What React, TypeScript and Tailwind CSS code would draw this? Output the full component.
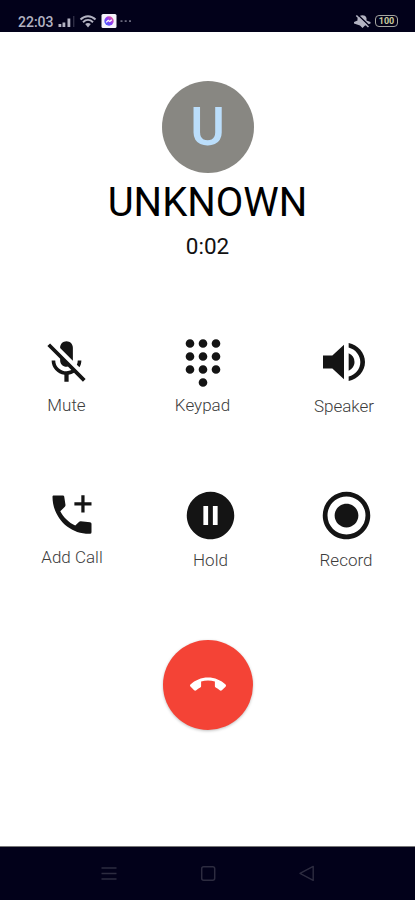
import type { ReactNode } from 'react'
import {
  MdCallEnd,
  MdDialpad,
  MdPauseCircleFilled,
  MdRadioButtonChecked,
  MdVolumeUp,
} from 'react-icons/md'

function StatusBar() {
  return (
    <header className="flex h-8 shrink-0 items-start justify-between bg-[#02011a] pt-[13px] pr-[17px] pl-[18px] text-[#b3b3c2]">
      <div className="flex h-4 items-center">
        <span className="w-[35px] pt-px text-[14px] leading-4 font-medium">22:03</span>
        <svg className="ml-[5px] h-4 w-[17px]" viewBox="0 0 17 16" fill="currentColor">
          <rect x="0.5" y="11" width="2.8" height="3" />
          <rect x="4.5" y="9.5" width="2.8" height="4.5" />
          <rect x="9.5" y="5.5" width="2.8" height="8.5" />
          <rect x="15" y="3" width="1.4" height="11" opacity="0.25" />
        </svg>
        <svg className="ml-1 h-4 w-[18px]" viewBox="0 0 18 16" fill="none" stroke="currentColor" strokeWidth="2">
          <path d="M1.5 6.5C6 2 12 2 16.5 6.5" />
          <path d="M4 9.2C7 6.3 11 6.3 14 9.2" />
          <path d="M6.2 11l2.8 3.5 2.8-3.5C10 9.5 8 9.5 6.2 11z" fill="currentColor" stroke="none" />
        </svg>
        <svg className="ml-1 h-4 w-4" viewBox="0 0 16 16">
          <defs>
            <linearGradient id="chat" x1="0" y1="1" x2="1" y2="0">
              <stop offset="0" stopColor="#2b6cff" />
              <stop offset="0.5" stopColor="#8a3df5" />
              <stop offset="1" stopColor="#ff5a7a" />
            </linearGradient>
          </defs>
          <rect x="0.5" y="1" width="15" height="14" rx="1.5" fill="#f4f3fa" />
          <circle cx="8" cy="8" r="4.7" fill="url(#chat)" />
          <path d="M5.2 9.4l2-2 1.6 1.1 2-1.8" fill="none" stroke="#fff" strokeWidth="1.3" />
        </svg>
        <svg className="ml-[3px] h-4 w-3" viewBox="0 0 12 16" fill="currentColor" opacity="0.65">
          <rect x="0.5" y="7.3" width="2" height="1.6" />
          <rect x="4.7" y="7.3" width="2" height="1.6" />
          <rect x="9" y="7.3" width="2" height="1.6" />
        </svg>
      </div>
      <div className="flex h-4 items-center gap-1">
        <svg className="h-4 w-[18px]" viewBox="0 0 18 16">
          <path d="M1 9L4.5 7.5V5.5C5 2.5 12 0.5 13.5 5v2.5L17.5 9v1.5L12 12.5 9.5 15 7 12.5 1 10.5z" fill="currentColor" />
          <path d="M4.5 1.5L16 12.5" stroke="#02011a" strokeWidth="1.6" />
          <path d="M3.3 2.5L15.5 14" stroke="currentColor" strokeWidth="1.6" />
        </svg>
        <div className="flex h-3 w-[23px] items-center justify-center rounded-[4px] border border-[#a5a5a0] text-[9px] leading-none font-bold text-[#c9c99f]">
          100
        </div>
      </div>
    </header>
  )
}

function MicOffIcon() {
  return (
    <svg className="h-[51px] w-[51px]" viewBox="0 0 24 24" fill="currentColor">
      <path d="M19 11h-1.7c0 .74-.16 1.43-.43 2.05l1.23 1.23c.56-.98.9-2.09.9-3.28zm-4.02.17c0-.06.02-.11.02-.17V5c0-1.66-1.34-3-3-3S9 3.34 9 5v.18l5.98 5.99zM4.27 3L3 4.27l6.01 6.01V11c0 1.66 1.33 3 2.99 3 .22 0 .44-.03.65-.08l1.66 1.66c-.71.33-1.5.52-2.31.52-2.76 0-5.3-2.1-5.3-5.1H5c0 3.41 2.72 6.23 6 6.72V21h2v-3.28c.91-.13 1.77-.45 2.54-.9L19.73 21 21 19.73 4.27 3z" />
    </svg>
  )
}

function AddCallIcon() {
  return (
    <svg className="h-[52px] w-[52px]" viewBox="0 0 24 24" fill="currentColor">
      <path d="M3.7 3h4.1q.5 0 .6.5l.6 3.9q0 .5-.3.8L6.6 10.3c1.5 2.9 3.9 5.2 6.9 6.6l1.7-1.7q.3-.3.8-.3l4.3.4q.7.1.7.7v4q0 .7-.7.7C10.5 20.9 3.1 13 3 3.7 3 3.2 3.2 3 3.7 3z" />
      <path d="M16.3 2.9h1.5v3.2H21v1.5h-3.2v3.2h-1.5V7.6h-3.2V6.1h3.2z" />
    </svg>
  )
}

function CallAction({ label, className, children }: { label: string; className: string; children: ReactNode }) {
  return (
    <button className={`flex flex-col items-center text-[#141414] ${className}`}>
      {children}
      <span className="text-[17px] leading-5 font-light whitespace-nowrap text-[#3c3c3c]">{label}</span>
    </button>
  )
}

function NavBar() {
  return (
    <nav className="flex h-[54px] shrink-0 items-center justify-center gap-[81px] border-t border-[#777] bg-[#02011a] pb-[2px] text-[#2d2c40]">
      <svg className="h-[18px] w-[18px]" viewBox="0 0 18 18" stroke="currentColor" strokeWidth="1.6">
        <path d="M1.5 4h15M1.5 9.5h15M1.5 15h15" />
      </svg>
      <svg className="h-[18px] w-[18px]" viewBox="0 0 18 18" fill="none" stroke="currentColor" strokeWidth="1.5">
        <rect x="2.7" y="2.7" width="13" height="13.6" rx="2" />
      </svg>
      <svg className="h-[18px] w-[18px]" viewBox="0 0 18 18" fill="none" stroke="currentColor" strokeWidth="1.4" strokeLinejoin="round">
        <path d="M15.2 2.4v14L2 9.4z" />
      </svg>
    </nav>
  )
}

export default function App() {
  return (
    <div className="flex h-[900px] w-full flex-col bg-white font-['Roboto',sans-serif]">
      <StatusBar />

      <main className="flex flex-1 flex-col">
        {/* Caller */}
        <section className="flex flex-col items-center pt-[49px]">
          <div className="flex h-[92px] w-[92px] items-center justify-center rounded-full bg-[#888782] text-[53px] leading-none font-medium text-[#bbdefb]">
            U
          </div>
          <h1 className="mt-[6px] text-[40px] leading-[48px] text-black">UNKNOWN</h1>
          <p className="mt-[5px] text-[22.5px] leading-7 text-[#111]">0:02</p>
        </section>

        {/* Actions */}
        <section className="mt-[76px] flex h-[151px] items-start pl-[31px]">
          <CallAction label="Mute" className="w-[71px] gap-[7px] pt-px">
            <MicOffIcon />
          </CallAction>
          <CallAction label="Keypad" className="ml-[65px] w-[71px] gap-[6px] pt-px">
            <MdDialpad className="h-[52px] w-[52px]" />
          </CallAction>
          <CallAction label="Speaker" className="ml-[70px] w-[72px] gap-2">
            <MdVolumeUp className="h-[52px] w-14" preserveAspectRatio="none" />
          </CallAction>
        </section>
        <section className="flex items-start pl-9">
          <CallAction label="Add Call" className="w-[72px] gap-[6px] pt-[2px]">
            <AddCallIcon />
          </CallAction>
          <CallAction label="Hold" className="ml-[66px] w-[73px] gap-[6px]">
            <MdPauseCircleFilled className="h-[57px] w-[57px]" />
          </CallAction>
          <CallAction label="Record" className="ml-[63px] w-[72px] gap-[6px]">
            <MdRadioButtonChecked className="h-[57px] w-[57px]" />
          </CallAction>
        </section>

        <button className="mt-[70px] flex h-[90px] w-[90px] items-center justify-center self-center rounded-full bg-[#f44336] text-white shadow-[0_1px_3px_rgba(0,0,0,0.25)]">
          <MdCallEnd className="h-9 w-9" />
        </button>
      </main>

      <NavBar />
    </div>
  )
}
